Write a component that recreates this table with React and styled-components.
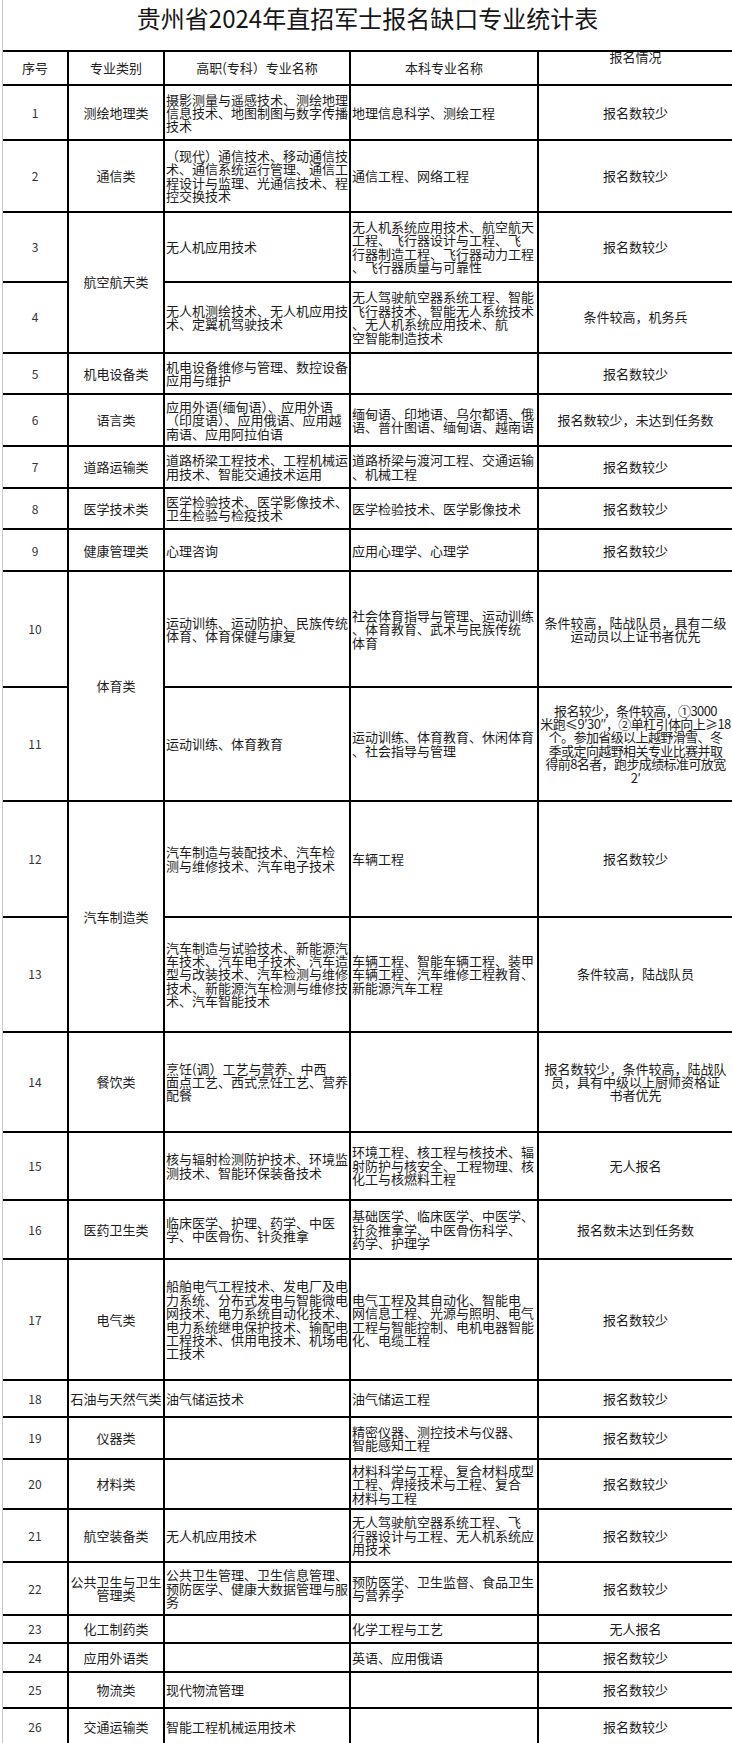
import React from "react";
import styled, { createGlobalStyle } from "styled-components";

const GlobalStyle = createGlobalStyle`
  html, body {
    margin: 0;
    padding: 0;
    background: #fff;
  }
  body {
    font-family: "Noto Sans CJK SC", "Noto Sans", sans-serif;
    color: #1c1c1c;
  }
`;

// each row: h = cell height (px), lines between rows are 2px
const rows = [
  { no: "1", h: 52.5, cat: ["测绘地理类"], gz: ["摄影测量与遥感技术、测绘地理", "信息技术、地图制图与数字传播", "技术"], bk: ["地理信息科学、测绘工程"], st: ["报名数较少"] },
  { no: "2", h: 69.7, cat: ["通信类"], gz: ["（现代）通信技术、移动通信技", "术、通信系统运行管理、通信工", "程设计与监理、光通信技术、程", "控交换技术"], bk: ["通信工程、网络工程"], st: ["报名数较少"] },
  { no: "3", h: 68, cat: ["航空航天类"], span: 2, gz: ["无人机应用技术"], bk: ["无人机系统应用技术、航空航天", "工程、飞行器设计与工程、飞", "行器制造工程、飞行器动力工程", "、飞行器质量与可靠性"], st: ["报名数较少"] },
  { no: "4", h: 69, merged: true, gz: ["无人机测绘技术、无人机应用技", "术、定翼机驾驶技术"], bk: ["无人驾驶航空器系统工程、智能", "飞行器技术、智能无人系统技术", "、无人机系统应用技术、航", "空智能制造技术"], st: ["条件较高，机务兵"] },
  { no: "5", h: 39.6, cat: ["机电设备类"], gz: ["机电设备维修与管理、数控设备", "应用与维护"], bk: [], st: ["报名数较少"] },
  { no: "6", h: 49.7, cat: ["语言类"], gz: ["应用外语(缅甸语）、应用外语", "（印度语）、应用俄语、应用越", "南语、应用阿拉伯语"], bk: ["缅甸语、印地语、乌尔都语、俄", "语、普什图语、缅甸语、越南语"], st: ["报名数较少，未达到任务数"] },
  { no: "7", h: 39.7, cat: ["道路运输类"], gz: ["道路桥梁工程技术、工程机械运", "用技术、智能交通技术运用"], bk: ["道路桥梁与渡河工程、交通运输", "、机械工程"], st: ["报名数较少"] },
  { no: "8", h: 39.6, cat: ["医学技术类"], gz: ["医学检验技术、医学影像技术、", "卫生检验与检疫技术"], bk: ["医学检验技术、医学影像技术"], st: ["报名数较少"] },
  { no: "9", h: 40, cat: ["健康管理类"], gz: ["心理咨询"], bk: ["应用心理学、心理学"], st: ["报名数较少"] },
  { no: "10", h: 113.4, cat: ["体育类"], span: 2, gz: ["运动训练、运动防护、民族传统", "体育、体育保健与康复"], bk: ["社会体育指导与管理、运动训练", "、体育教育、武术与民族传统", "体育"], st: ["条件较高，陆战队员，具有二级", "运动员以上证书者优先"] },
  { no: "11", h: 112.3, merged: true, gz: ["运动训练、体育教育"], bk: ["运动训练、体育教育、休闲体育", "、社会指导与管理"], st: ["报名较少，条件较高，①3000", "米跑≤9′30″，②单杠引体向上≥18", "个。参加省级以上越野滑雪、冬", "季或定向越野相关专业比赛并取", "得前8名者，跑步成绩标准可放宽", "2′"], tight: true },
  { no: "12", h: 113.7, cat: ["汽车制造类"], span: 2, gz: ["汽车制造与装配技术、汽车检", "测与维修技术、汽车电子技术"], bk: ["车辆工程"], st: ["报名数较少"] },
  { no: "13", h: 113, merged: true, gz: ["汽车制造与试验技术、新能源汽", "车技术、汽车电子技术、汽车造", "型与改装技术、汽车检测与维修", "技术、新能源汽车检测与维修技", "术、汽车智能技术"], bk: ["车辆工程、智能车辆工程、装甲", "车辆工程、汽车维修工程教育、", "新能源汽车工程"], st: ["条件较高，陆战队员"] },
  { no: "14", h: 98, cat: ["餐饮类"], gz: ["烹饪(调）工艺与营养、中西", "面点工艺、西式烹饪工艺、营养", "配餐"], bk: [], st: ["报名数较少，条件较高，陆战队", "员，具有中级以上厨师资格证", "书者优先"] },
  { no: "15", h: 65.9, cat: [], gz: ["核与辐射检测防护技术、环境监", "测技术、智能环保装备技术"], bk: ["环境工程、核工程与核技术、辐", "射防护与核安全、工程物理、核", "化工与核燃料工程"], st: ["无人报名"] },
  { no: "16", h: 57.7, cat: ["医药卫生类"], gz: ["临床医学、护理、药学、中医", "学、中医骨伤、针灸推拿"], bk: ["基础医学、临床医学、中医学、", "针灸推拿学、中医骨伤科学、", "药学、护理学"], st: ["报名数未达到任务数"] },
  { no: "17", h: 118.7, cat: ["电气类"], gz: ["船舶电气工程技术、发电厂及电", "力系统、分布式发电与智能微电", "网技术、电力系统自动化技术、", "电力系统继电保护技术、输配电", "工程技术、供用电技术、机场电", "工技术"], bk: ["电气工程及其自动化、智能电", "网信息工程、光源与照明、电气", "工程与智能控制、电机电器智能", "化、电缆工程"], st: ["报名数较少"] },
  { no: "18", h: 35.3, cat: ["石油与天然气类"], gz: ["油气储运技术"], bk: ["油气储运工程"], st: ["报名数较少"] },
  { no: "19", h: 40, cat: ["仪器类"], gz: [], bk: ["精密仪器、测控技术与仪器、", "智能感知工程"], st: ["报名数较少"] },
  { no: "20", h: 48, cat: ["材料类"], gz: [], bk: ["材料科学与工程、复合材料成型", "工程、焊接技术与工程、复合", "材料与工程"], st: ["报名数较少"] },
  { no: "21", h: 50.4, cat: ["航空装备类"], gz: ["无人机应用技术"], bk: ["无人驾驶航空器系统工程、飞", "行器设计与工程、无人机系统应", "用技术"], st: ["报名数较少"] },
  { no: "22", h: 51.3, cat: ["公共卫生与卫生", "管理类"], gz: ["公共卫生管理、卫生信息管理、", "预防医学、健康大数据管理与服", "务"], bk: ["预防医学、卫生监督、食品卫生", "与营养学"], st: ["报名数较少"] },
  { no: "23", h: 26.3, cat: ["化工制药类"], gz: [], bk: ["化学工程与工艺"], st: ["无人报名"] },
  { no: "24", h: 26.4, cat: ["应用外语类"], gz: [], bk: ["英语、应用俄语"], st: ["报名数较少"] },
  { no: "25", h: 34.6, cat: ["物流类"], gz: ["现代物流管理"], bk: [], st: ["报名数较少"] },
  { no: "26", h: 35.7, cat: ["交通运输类"], gz: ["智能工程机械运用技术"], bk: [], st: ["报名数较少"] },
];

const HEADER_H = 32.8;

const Page = styled.div`
  width: 729px;
  margin-left: 2px;
  border-left: 1px solid #c9c9c9;
  overflow: hidden;
`;

const Title = styled.h1`
  margin: 0;
  height: 49.7px;
  box-sizing: border-box;
  padding-top: 3px;
  text-align: center;
  font-size: 24px;
  line-height: 30px;
  font-weight: 400;
  color: #161616;
`;

const Sheet = styled.div`
  display: grid;
  grid-template-columns: 64px 94px 184px 186px 1fr;
  gap: 2px;
  padding-top: 2px;
  background: #000;
`;

const Cell = styled.div`
  grid-column: ${(p) => p.$col};
  grid-row: span ${(p) => p.$span || 1};
  background: #fff;
  display: flex;
  flex-direction: column;
  justify-content: ${(p) => (p.$top ? "flex-start" : "center")};
  align-items: ${(p) => (p.$left ? "flex-start" : "center")};
  text-align: ${(p) => (p.$left ? "left" : "center")};
  padding-left: ${(p) => (p.$left ? "1px" : "0")};
  font-size: ${(p) => (p.$num ? "12px" : "13px")};
  line-height: 13.4px;
  color: ${(p) => (p.$num ? "#333" : "#1c1c1c")};
  letter-spacing: ${(p) => (p.$tight ? "-0.6px" : "0")};
  overflow: hidden;
`;

const HeadCell = styled(Cell)`
  font-size: 13px;
  color: #222;
`;

const ClippedHead = styled.span`
  display: block;
  margin-top: -2px;
  white-space: nowrap;
`;

const Line = styled.span`
  display: block;
  white-space: nowrap;
`;

function Lines({ items }) {
  return items.map((t, i) => <Line key={i}>{t}</Line>);
}

export default function App() {
  const template = [HEADER_H, ...rows.map((r) => r.h)].map((h) => `${h}px`).join(" ");

  return (
    <Page>
      <GlobalStyle />
      <Title>贵州省2024年直招军士报名缺口专业统计表</Title>
      <Sheet style={{ gridTemplateRows: template }}>
        <HeadCell $col={1}>序号</HeadCell>
        <HeadCell $col={2}>专业类别</HeadCell>
        <HeadCell $col={3}>高职(专科）专业名称</HeadCell>
        <HeadCell $col={4}>本科专业名称</HeadCell>
        <HeadCell $col={5} $top>
          <ClippedHead>报名情况</ClippedHead>
        </HeadCell>

        {rows.map((r) => (
          <React.Fragment key={r.no}>
            <Cell $col={1} $num>{r.no}</Cell>
            {!r.merged && (
              <Cell $col={2} $span={r.span}>
                <Lines items={r.cat} />
              </Cell>
            )}
            <Cell $col={3} $left>
              <Lines items={r.gz} />
            </Cell>
            <Cell $col={4} $left>
              <Lines items={r.bk} />
            </Cell>
            <Cell $col={5} $tight={r.tight}>
              <Lines items={r.st} />
            </Cell>
          </React.Fragment>
        ))}
      </Sheet>
    </Page>
  );
}
